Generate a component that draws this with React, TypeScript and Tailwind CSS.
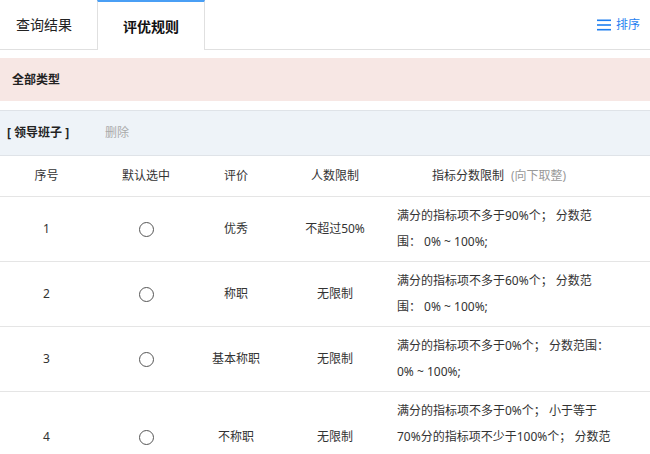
import React from "react";

const rows = [
  { n: "1", p: "优秀", lim: "不超过50%", lines: "满分的指标项不多于90%个； 分数范围： 0% ~ 100%;" },
  { n: "2", p: "称职", lim: "无限制", lines: "满分的指标项不多于60%个； 分数范围： 0% ~ 100%;" },
  { n: "3", p: "基本称职", lim: "无限制", lines: "满分的指标项不多于0%个； 分数范围： 0% ~ 100%;" },
  { n: "4", p: "不称职", lim: "无限制", lines: "满分的指标项不多于0%个； 小于等于70%分的指标项不少于100%个； 分数范围： 0% ~ 100%;" },
];

export default function App() {
  return (
    <div
      className="w-[650px] h-[454px] overflow-hidden bg-white text-[#333]"
      style={{ fontFamily: '"Noto Sans", "Noto Sans CJK SC", sans-serif' }}
    >
      {/* Tabs */}
      <div className="flex h-[50px] border-b border-[#e0e0e0] items-stretch">
        <div className="w-[97px] pl-[16px] flex items-center text-[14px] text-[#222]">查询结果</div>
        <div className="w-[108px] -mb-px bg-white border-t-2 border-t-[#4a9ff5] border-x border-x-[#e0e0e0] flex items-center justify-center text-[14px] font-bold text-[#111]">
          评优规则
        </div>
        <div className="flex-1" />
        <div className="flex items-center gap-[5px] pr-[10px] text-[#1f7ff0] text-[12px]">
          <svg width="14" height="12" viewBox="0 0 14 12">
            <rect x="0" y="0.5" width="14" height="1.6" fill="#1f7ff0" />
            <rect x="0" y="5.2" width="14" height="1.6" fill="#1f7ff0" />
            <rect x="0" y="9.9" width="14" height="1.6" fill="#1f7ff0" />
          </svg>
          <span>排序</span>
        </div>
      </div>

      <div className="mt-[8px] h-[43px] bg-[#f7e7e4] flex items-center pl-[12px] text-[12px] font-bold text-[#222]">
        全部类型
      </div>

      <div className="mt-[9px] h-[46px] bg-[#eef3f8] border-y border-[#dfe3e8] flex items-center text-[12px]">
        <span className="pl-[7px] font-bold text-[#222] w-[105px]">[ 领导班子 ]</span>
        <span className="text-[#aaa]">删除</span>
      </div>

      {/* Header */}
      <div className="flex h-[41px] border-b border-[#e5e5e5] items-center text-[12px] text-[#333]">
        <div className="w-[93px] text-center">序号</div>
        <div className="w-[106px] text-center">默认选中</div>
        <div className="w-[74px] text-center">评价</div>
        <div className="w-[124px] text-center">人数限制</div>
        <div className="pl-[35px]">
          指标分数限制<span className="ml-[7px] text-[#999]">(向下取整)</span>
        </div>
      </div>

      {rows.map((r) => (
        <div key={r.n} className="flex border-b border-[#e5e5e5] items-center text-[12px] text-[#333]">
          <div className="w-[93px] text-center">{r.n}</div>
          <div className="w-[106px] flex justify-center">
            <span className="block w-[15px] h-[15px] rounded-full border border-[#555]" />
          </div>
          <div className="w-[74px] text-center">{r.p}</div>
          <div className="w-[124px] text-center">{r.lim}</div>
          <div className="w-[218px] py-[6px] leading-[26px]">{r.lines}</div>
        </div>
      ))}
    </div>
  );
}
